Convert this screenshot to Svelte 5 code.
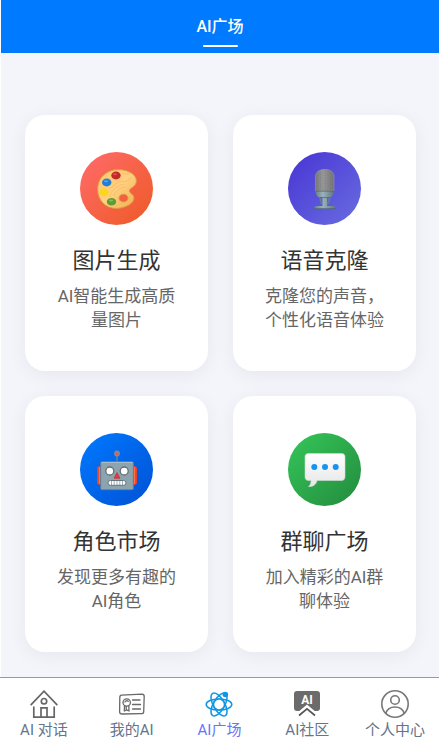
<script>
    // Mobile "AI square" page: header, four feature cards, bottom tab bar.

    const cards = [
        { id: 'image', title: '图片生成', desc: 'AI智能生成高质量图片' },
        { id: 'voice', title: '语音克隆', desc: '克隆您的声音，个性化语音体验' },
        { id: 'role', title: '角色市场', desc: '发现更多有趣的AI角色' },
        { id: 'group', title: '群聊广场', desc: '加入精彩的AI群聊体验' },
    ]

    const tabs = [
        { id: 'chat', label: 'AI 对话' },
        { id: 'mine', label: '我的AI' },
        { id: 'square', label: 'AI广场' },
        { id: 'community', label: 'AI社区' },
        { id: 'profile', label: '个人中心' },
    ]

    let active = $state('square')
</script>

<div class="page">
    <header class="header">
        <h1>AI广场</h1>
    </header>

    <main class="grid">
        {#each cards as card (card.id)}
            <a class="card" href="#{card.id}">
                <span class="badge {card.id}">
                    <svg viewBox="0 0 40 40" aria-hidden="true">
                        {#if card.id === 'image'}
                            <defs>
                                <linearGradient id="wood" x1="0" y1="0" x2="1" y2="1">
                                    <stop offset="0" stop-color="#ffc46e" />
                                    <stop offset="0.5" stop-color="#ffd080" />
                                    <stop offset="1" stop-color="#f2ad4e" />
                                </linearGradient>
                            </defs>
                            <path
                                fill="url(#wood)"
                                stroke="#d99a45"
                                stroke-width="1"
                                fill-rule="evenodd"
                                d="M22 .6C10 .2 .6 8.5 .6 20c0 11.5 8 19.4 18.4 19.4 9.5 0 18-5 18-10.4 0-4-4.6-4.2-4.6-7.2 0-3 7-3.8 7-9.8C39.4 5.5 31.5 .9 22 .6zM26.5 25.2a4.5 3.9 0 1 1 0 7.8 4.5 3.9 0 1 1 0-7.8z"
                            />
                            <g fill="none" stroke="#f3b75f" stroke-width=".7">
                                <path d="M13 28c1-7 7-11 14-13M17 27c1-5 5-8 11-9M22 12c4 2 9 0 13-4M18 37c5-1 8-3 9-4M25 4c3 1 5 1 8 1M12 20c4-2 5-5 10-7" />
                            </g>
                            <ellipse cx="19" cy="6.5" rx="4.7" ry="3.9" fill="#c62828" />
                            <ellipse cx="9.7" cy="13.5" rx="4.7" ry="3.9" fill="#1e7fd6" />
                            <ellipse cx="7" cy="23.2" rx="4.7" ry="3.6" fill="#fdd61a" />
                            <ellipse cx="14.5" cy="32.7" rx="4.7" ry="3.8" fill="#609b33" />
                            <ellipse cx="18" cy="5.3" rx="2" ry="1" fill="#de5052" />
                            <ellipse cx="9" cy="12.3" rx="2" ry="1" fill="#51a7ef" />
                            <ellipse cx="14" cy="31.5" rx="2" ry="1" fill="#85bd57" />
                        {:else if card.id === 'voice'}
                            <defs>
                                <linearGradient id="mesh">
                                    <stop offset="0" stop-color="#777" />
                                    <stop offset="0.4" stop-color="#999" />
                                    <stop offset="1" stop-color="#747474" />
                                </linearGradient>
                                <linearGradient id="steel">
                                    <stop offset="0" stop-color="#668089" />
                                    <stop offset="0.4" stop-color="#9bb2bc" />
                                    <stop offset="1" stop-color="#5c747e" />
                                </linearGradient>
                            </defs>
                            <path fill="url(#mesh)" stroke="#999" stroke-width=".6" d="M10.5 22V7c0-4 4-6.6 9.3-6.6S29 3 29 7v15z" />
                            <path stroke="#6e6e6e" stroke-width=".4" stroke-dasharray="1 1" d="M13 4v17M15.5 3v18M18 2v19M20.5 2v19M23 2v19M25.5 3v18M27.5 5v16" />
                            <path fill="url(#steel)" d="M10.5 22H29c0 3.5-1.8 5.8-4 6.5H14.5c-2.2-.7-4-3-4-6.5z" />
                            <path fill="none" stroke="#658089" stroke-width="1.8" d="M15.5 28v3.5c0 2 2 3.5 4.3 3.5s4.4-1.5 4.4-3.5V28" />
                            <path fill="url(#steel)" d="M17.5 28h4.6v9h6c2 0 3 1.2 3 2.8H9c0-1.6 1-2.8 3-2.8h5.5z" />
                            <path stroke="#4c646d" stroke-width=".7" d="M10.5 22.2H29M15 28.5h9.7M9 39.6h22" />
                        {:else if card.id === 'role'}
                            <path fill="#e9402b" d="M0 18.5C0 17 1 16 3.5 16v19C1 35 0 34 0 32.5zM40 18.5c0-1.5-1-2.5-3.5-2.5v19c2.5 0 3.5-1 3.5-2.5z" />
                            <path stroke="#ff7043" stroke-width="1.2" d="M2.4 17v17M37.6 17v17" />
                            <path stroke="#6d8994" stroke-width="1.3" d="M20 5v8" />
                            <circle cx="20" cy="3.5" r="2.9" fill="#78909c" />
                            <circle cx="20" cy="3.5" r="1.6" fill="#f0544c" />
                            <rect x="3.7" y="11.7" width="32.6" height="28" rx="1.2" fill="#8da4ae" stroke="#68838e" stroke-width=".8" />
                            <path stroke="#a7bbc4" d="M4.5 12.5h31" />
                            <circle cx="12.8" cy="21" r="4" fill="#fff" stroke="#626f75" stroke-width="1.3" />
                            <circle cx="27.2" cy="21" r="4" fill="#fff" stroke="#626f75" stroke-width="1.3" />
                            <path fill="#e63b3b" stroke="#c62828" stroke-width=".6" stroke-linejoin="round" d="M20 22.5l3 5.7h-6z" />
                            <rect x="11" y="30.5" width="18" height="4.8" rx="2.4" fill="#fff" stroke="#667780" />
                            <path stroke="#667780" stroke-width=".6" d="M14.5 30.5v4.8M17.2 30.5v4.8M20 30.5v4.8M22.8 30.5v4.8M25.5 30.5v4.8" />
                        {:else}
                            <defs>
                                <linearGradient id="bubble" x1="0" y1="0" x2="0" y2="1">
                                    <stop offset="0" stop-color="#fff" />
                                    <stop offset="1" stop-color="#e6e6e6" />
                                </linearGradient>
                            </defs>
                            <path fill="url(#bubble)" stroke="#d1dad3" stroke-width=".6" d="M3.5 3.5h33C39 3.5 40 5 40 7v19.5c0 2.5-1.2 4-3.5 4H12C11 35 7.5 37 3.5 36.5 5.5 35 6 33 6 30.5H3.5C1.2 30.5 0 29 0 26.5V7c0-2 1-3.5 3.5-3.5z" />
                            <g fill="#1993ee">
                                <circle cx="9.3" cy="17" r="3" />
                                <circle cx="20" cy="17" r="3" />
                                <circle cx="30.7" cy="17" r="3" />
                            </g>
                        {/if}
                    </svg>
                </span>
                <h2>{card.title}</h2>
                <p>{card.desc}</p>
            </a>
        {/each}
    </main>

    <nav class="tabbar">
        {#each tabs as tab (tab.id)}
            <button class="tab" class:active={active === tab.id} onclick={() => (active = tab.id)}>
                <svg viewBox="0 0 28 28" aria-hidden="true" fill="none">
                    {#if tab.id === 'chat'}
                        <g stroke="#666" stroke-width="1.7">
                            <path d="M.7 15.2L14 1.2l13.3 14M3.8 16.5v10.6h20.4V16.5M11 27v-9.2h6V27" />
                            <circle cx="14" cy="11.2" r="2.7" />
                        </g>
                    {:else if tab.id === 'mine'}
                        <g stroke="#686868" stroke-width="1.3" stroke-linecap="round" stroke-linejoin="round">
                            <path d="M3.5 5.2L24 4.2c1.5 0 2.2.8 2.2 2.2l-.5 15c0 1.4-.7 2.2-2.2 2.2L4 24c-1.6 0-2.4-.8-2.4-2.3l.2-14.2c0-1.5.4-2.2 1.7-2.3z" />
                            <circle cx="8.7" cy="12.5" r="3.7" />
                            <path d="M7 12a2 2 0 0 1 3.2-.8M6.5 16l-.2 5 2.4-1.2 2.3 1.2-.2-5M8.2 16.5v2.5M14.5 10h7.5M14.5 14.5h8M14.5 19h8" />
                        </g>
                    {:else if tab.id === 'square'}
                        <g stroke="#1296e4" stroke-width="1.5">
                            <ellipse cx="14" cy="14.5" rx="12.8" ry="5.6" />
                            <ellipse cx="14" cy="14.5" rx="12.8" ry="5.6" transform="rotate(60 14 14.5)" />
                            <ellipse cx="14" cy="14.5" rx="12.8" ry="5.6" transform="rotate(120 14 14.5)" />
                        </g>
                        <circle cx="14" cy="14.5" r="5.5" fill="#fff" stroke="#1296e4" stroke-width="1.5" />
                        <circle cx="20.3" cy="4.5" r="2.8" fill="#1296e4" />
                    {:else if tab.id === 'community'}
                        <rect x="1" y="1" width="26" height="20" rx="3" fill="#6b6b6b" />
                        <path fill="#fff" d="M4 23l10-8.5L24 23z" />
                        <path stroke="#555" stroke-width="1.7" d="M6 25.5l8-6.7 8 6.7" />
                        <text x="14" y="14" text-anchor="middle">AI</text>
                    {:else}
                        <g stroke="#777" stroke-width="1.6">
                            <circle cx="14" cy="14" r="13.2" />
                            <circle cx="14" cy="10" r="4.3" />
                            <path d="M4.8 23.2C6 19.5 9.5 17 14 17s8 2.5 9.2 6.2" />
                        </g>
                    {/if}
                </svg>
                <span>{tab.label}</span>
            </button>
        {/each}
    </nav>
</div>

<style>
    :global(body) {
        margin: 0;
        background: #fff;
    }

    .page {
        min-height: 100vh;
        display: flex;
        flex-direction: column;
        margin-left: 1px;
        background: #f4f5fa;
        font-family: Roboto, 'Noto Sans CJK SC', sans-serif;
    }

    .header {
        display: flex;
        flex-direction: column;
        align-items: center;
        height: 53px;
        background: #007aff;
        color: #fff;
    }

    h1 {
        margin: 15px 0 6px;
        font-size: 16px;
        line-height: 24px;
        font-weight: 500;
    }

    .header::after {
        content: '';
        width: 35px;
        height: 2px;
        border-radius: 1px;
        background: #fff;
    }

    .grid {
        flex: 1;
        display: grid;
        grid-template-columns: 1fr 1fr;
        align-content: start;
        gap: 25px;
        padding: 62px 23px 25px 24px;
    }

    .card {
        display: flex;
        flex-direction: column;
        align-items: center;
        padding: 37px 28px 39px;
        border-radius: 20px;
        background: #fff;
        box-shadow: 0 4px 20px rgba(0, 0, 0, 0.06);
        text-align: center;
        text-decoration: none;
    }

    .badge {
        display: flex;
        align-items: center;
        justify-content: center;
        width: 73px;
        height: 73px;
        border-radius: 50%;
    }

    .badge svg {
        width: 40px;
        height: 40px;
        overflow: visible;
    }

    .image {
        background: linear-gradient(135deg, #ff6b6b, #ee5a24);
    }

    .voice {
        background: linear-gradient(135deg, #4834d4, #686de0);
    }

    .role {
        background: linear-gradient(135deg, #007aff, #0051d5);
    }

    .group {
        background: linear-gradient(135deg, #34c759, #248a3d);
    }

    h2 {
        margin: 20px 0 7px;
        color: #333;
        font-size: 22px;
        line-height: 32px;
        font-weight: 400;
    }

    p {
        margin: 0;
        color: #666;
        font-size: 17px;
        line-height: 24px;
    }

    .tabbar {
        display: flex;
        margin-left: -1px;
        border-top: 1px solid #999;
        background: #fff;
    }

    .tab {
        flex: 1;
        display: flex;
        flex-direction: column;
        align-items: center;
        gap: 2px;
        padding: 12px 0 9px;
        border: none;
        background: none;
        color: #64748b;
        font-family: inherit;
        font-size: 15px;
        line-height: 20px;
        white-space: nowrap;
        cursor: pointer;
    }

    .tab.active {
        color: #6676f5;
    }

    .tab svg {
        width: 28px;
        height: 28px;
    }

    .tab text {
        fill: #fff;
        font-size: 12px;
        font-weight: 700;
    }
</style>
